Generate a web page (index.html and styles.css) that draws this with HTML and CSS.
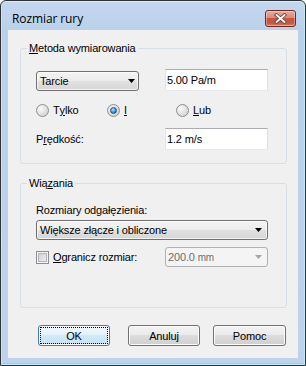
FILE: index.html
```html
<!doctype html>
<html lang="pl">
<head>
    <meta charset="UTF-8" />
    <meta name="viewport" content="width=device-width, initial-scale=1.0" />
    <link rel="stylesheet" href="styles.css">
</head>
<body>
    <div class="window">
        <div class="title-bar">
            <span class="title">Rozmiar rury</span>
            <button class="close-btn" aria-label="Zamknij">
                <svg width="13" height="11" viewBox="0 0 13 11">
                    <path d="M2.5 2 L10.5 9 M10.5 2 L2.5 9" stroke="#6a4a44" stroke-width="3.6" stroke-linecap="square" fill="none" />
                    <path d="M2.5 2 L10.5 9 M10.5 2 L2.5 9" stroke="#fff" stroke-width="1.8" stroke-linecap="square" fill="none" />
                </svg>
            </button>
        </div>

        <div class="client">
            <fieldset class="group group-method">
                <legend><u>M</u>etoda wymiarowania</legend>
                <div class="group-body">
                    <div class="row row-method">
                        <div class="combo combo-short">
                            <span>Tarcie</span>
                            <svg class="arrow" width="7" height="4" viewBox="0 0 7 4"><polygon points="0,0 7,0 3.5,4" fill="#000" /></svg>
                        </div>
                        <div class="textbox">5.00 Pa/m</div>
                    </div>

                    <div class="row row-radios">
                        <label class="radio-item radio-tylko"><span class="radio"></span>T<u>y</u>lko</label>
                        <label class="radio-item radio-i"><span class="radio checked"></span><u>I</u></label>
                        <label class="radio-item"><span class="radio"></span><u>L</u>ub</label>
                    </div>

                    <div class="row row-speed">
                        <span class="field-label">P<u>r</u>ędkość:</span>
                        <div class="textbox">1.2 m/s</div>
                    </div>
                </div>
            </fieldset>

            <fieldset class="group group-links">
                <legend>Wią<u>z</u>ania</legend>
                <div class="group-body">
                    <div class="caption">Rozmiary odgałęzienia:</div>
                    <div class="combo combo-wide">
                        <span>Większe złącze i obliczone</span>
                        <svg class="arrow" width="7" height="4" viewBox="0 0 7 4"><polygon points="0,0 7,0 3.5,4" fill="#000" /></svg>
                    </div>

                    <div class="row row-limit">
                        <label class="check-item"><span class="checkbox"></span><u>O</u>granicz rozmiar:</label>
                        <div class="combo combo-disabled">
                            <span>200.0 <small>mm</small></span>
                            <svg class="arrow" width="7" height="4" viewBox="0 0 7 4"><polygon points="0,0 7,0 3.5,4" fill="#a6a6a6" /></svg>
                        </div>
                    </div>
                </div>
            </fieldset>

            <div class="buttons">
                <button class="btn btn-default">OK</button>
                <button class="btn btn-cancel">Anuluj</button>
                <button class="btn btn-help">Pomoc</button>
            </div>
        </div>
    </div>
</body>
</html>
```

FILE: styles.css
```css
body {
    margin: 0;
    padding: 0;
    font-family: "Liberation Sans", Arial, sans-serif;
    font-size: 11px;
    letter-spacing: -0.15px;
    color: #000;
}

.window {
    width: 306px;
    height: 366px;
    box-sizing: border-box;
    border: 1px solid #2f3336;
    border-radius: 6px 6px 0 0;
    padding: 0 7px 7px;
    background: linear-gradient(#c4d8ef, #b9d1ea 30px, #bdd3eb);
    box-shadow: inset 0 0 0 1px rgba(255, 255, 255, 0.45), inset 0 -1px 0 1px rgba(120, 220, 240, 0.6);
    display: flex;
    flex-direction: column;
}

.title-bar {
    height: 29px;
    display: flex;
    justify-content: space-between;
    align-items: flex-start;
}

.title {
    font-family: "Open Sans", sans-serif;
    font-size: 12px;
    letter-spacing: -0.1px;
    line-height: 16px;
    margin: 10px 0 0 4px;
}

.close-btn {
    width: 31px;
    height: 17px;
    margin: 9px 2px 0 0;
    padding: 0;
    border: 1px solid #6e2a20;
    border-radius: 3px;
    background: linear-gradient(#e9ab9f, #d98a7c 45%, #c8553e 50%, #c4593f 80%, #d7836a);
    box-shadow: inset 0 0 0 1px rgba(255, 255, 255, 0.35);
    display: flex;
    align-items: center;
    justify-content: center;
}

.client {
    flex: 1;
    background: #f0f0f0;
    padding-top: 12px;
}

.group {
    margin: 0 11px 0 12px;
    padding: 0 0 13px 6px;
    border: 1px solid #d5dfe5;
    border-radius: 3px;
    min-width: 0;
}

.group legend {
    padding: 0 2px;
    line-height: 13px;
}

.group-links {
    margin-top: 13px;
    padding-bottom: 40px;
}

.group-body {
    margin-left: 9px;
}

.row {
    display: flex;
    align-items: center;
}

.row-method {
    margin-top: 14px;
    align-items: flex-end;
}

.row-radios {
    margin-top: 13px;
    height: 13px;
}

.row-speed {
    margin-top: 11px;
}

.row-limit {
    margin-top: 7px;
}

.field-label,
.check-item {
    width: 129px;
}

.caption {
    margin-top: 14px;
    line-height: 13px;
}

.radio-item,
.check-item {
    display: flex;
    align-items: center;
    line-height: 13px;
}

.radio-tylko {
    width: 71px;
}

.radio-i {
    width: 69px;
}

.radio {
    position: relative;
    flex: none;
    width: 13px;
    height: 13px;
    box-sizing: border-box;
    margin-right: 4px;
    border: 1px solid #8e8f8f;
    border-radius: 50%;
    background: radial-gradient(circle at 35% 35%, #fbfbfb, #dcdcdc 60%, #c9c9c9);
}

.radio.checked::after {
    content: "";
    position: absolute;
    left: 2px;
    top: 2px;
    width: 7px;
    height: 7px;
    box-sizing: border-box;
    border: 1px solid #23547f;
    border-radius: 50%;
    background: radial-gradient(circle at 40% 35%, #b6e6ff, #3a93dc 55%, #0d4d8e);
}

.checkbox {
    flex: none;
    width: 13px;
    height: 13px;
    box-sizing: border-box;
    margin-right: 4px;
    border: 1px solid #8e8f8f;
    background: linear-gradient(135deg, #c6cad0, #f4f4f4);
    box-shadow: inset 0 0 0 1px #f4f4f4, inset 0 0 0 2px #b3b7bd;
}

.textbox {
    width: 103px;
    height: 22px;
    box-sizing: border-box;
    padding-left: 1px;
    border: 1px solid;
    border-color: #abadb3 #dbdfe6 #e3e9ef #e2e3ea;
    background: #fff;
    display: flex;
    align-items: center;
}

.row-method .textbox {
    margin-left: 26px;
}

.combo {
    height: 20px;
    box-sizing: border-box;
    padding: 0 5px 0 3px;
    border: 1px solid #707070;
    border-radius: 3px;
    background: linear-gradient(#f3f3f3, #ececec 50%, #e1e1e1 50%, #d6d6d6);
    box-shadow: inset 0 0 0 1px rgba(255, 255, 255, 0.7);
    display: flex;
    align-items: center;
    justify-content: space-between;
}

.combo-short {
    width: 103px;
    padding-right: 3px;
}

.combo-wide {
    width: 232px;
    margin-top: 3px;
}

.combo-disabled {
    width: 103px;
    padding-left: 2px;
    border-color: #adb2b5;
    background: #f4f4f4;
    box-shadow: none;
    color: #6d6d6d;
}

.combo-disabled small {
    font-size: 10px;
}

.arrow {
    flex: none;
}

.buttons {
    display: flex;
    margin: 17px 0 0 30px;
}

.btn {
    width: 72px;
    height: 21px;
    padding: 0;
    border: 1px solid #707070;
    border-radius: 3px;
    background: linear-gradient(#f2f2f2, #ebebeb 50%, #dddddd 50%, #cfcfcf);
    box-shadow: inset 0 0 0 1px #fcfcfc;
    font-family: "Liberation Sans", Arial, sans-serif;
    font-size: 11px;
    letter-spacing: -0.15px;
    color: #000;
}

.btn-default {
    border-color: #3c7fb1;
    background: linear-gradient(#f0f8fd, #e3f1fb 50%, #d2e9f8 50%, #c4e2f5);
    outline: 1px dotted #000;
    outline-offset: -3px;
}

.btn-cancel {
    margin-left: 18px;
}

.btn-help {
    width: 73px;
    margin-left: 13px;
}
```
